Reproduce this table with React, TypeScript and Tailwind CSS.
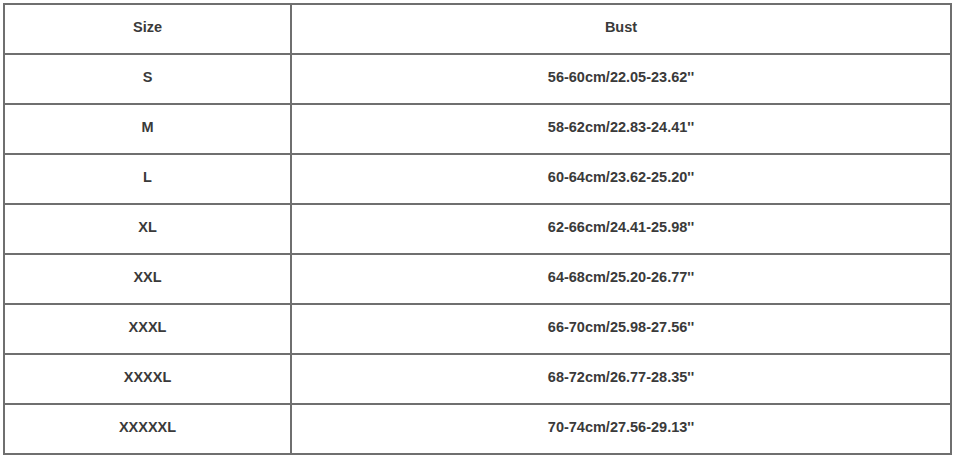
import React from "react";

const rows: [string, string][] = [
  ["Size", "Bust"],
  ["S", "56-60cm/22.05-23.62''"],
  ["M", "58-62cm/22.83-24.41''"],
  ["L", "60-64cm/23.62-25.20''"],
  ["XL", "62-66cm/24.41-25.98''"],
  ["XXL", "64-68cm/25.20-26.77''"],
  ["XXXL", "66-70cm/25.98-27.56''"],
  ["XXXXL", "68-72cm/26.77-28.35''"],
  ["XXXXXL", "70-74cm/27.56-29.13''"],
];

export default function App() {
  return (
    <div className="w-[956px] h-[457px] bg-white pt-[3px] pl-[3px] [font-family:'Liberation_Sans',Arial,sans-serif]">
      <div className="grid w-[949px] grid-cols-[285px_1fr] gap-[2px] bg-[#6f6f6f] p-[2px]">
        {rows.map(([a, b], i) => (
          <React.Fragment key={i}>
            <div className="flex h-[48px] items-center justify-center bg-white pb-[2px] text-[14.5px] font-bold text-[#3a3a3a]">
              {a}
            </div>
            <div className="flex h-[48px] items-center justify-center bg-white pb-[2px] text-[14.5px] font-bold text-[#3a3a3a]">
              {b}
            </div>
          </React.Fragment>
        ))}
      </div>
    </div>
  );
}
